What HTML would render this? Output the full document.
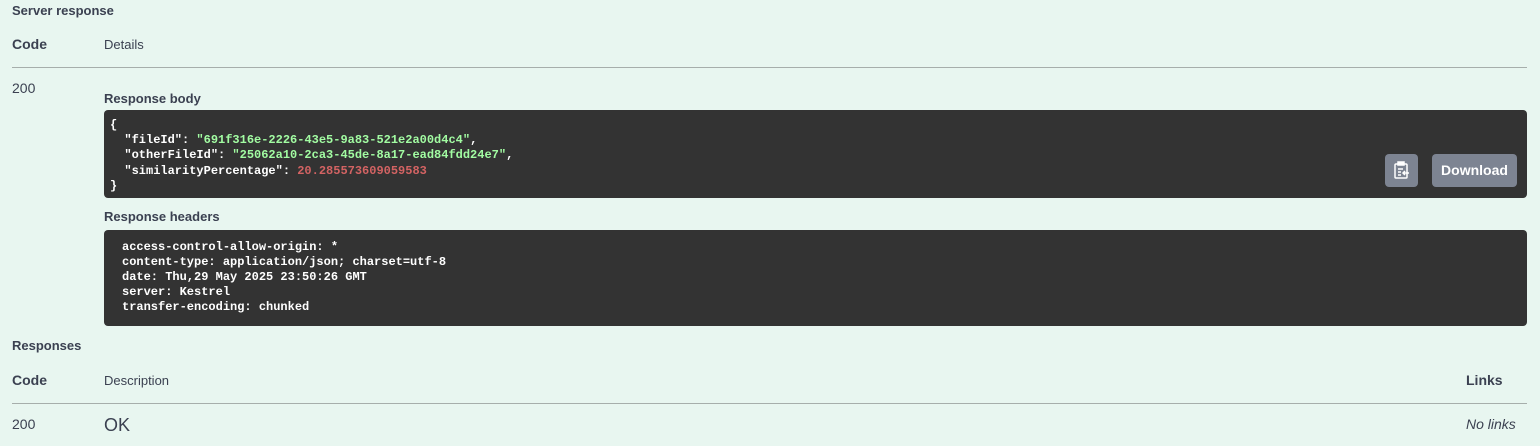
<!DOCTYPE html>
<html><head><style>
body{margin:0;width:1540px;height:446px;background:#e8f6f0;font-family:"Liberation Sans",Arial,sans-serif;color:#3b4151;position:relative;overflow:hidden}
.a{position:absolute;white-space:nowrap}
.h{font-size:12px;font-weight:bold}
.line{position:absolute;left:12px;width:1515px;height:1px;background:#a6aeab}
pre{margin:0;font-family:"Liberation Mono",monospace;font-size:12px;font-weight:bold;color:#fff;}
.box{position:absolute;left:104px;width:1423px;background:#333;border-radius:4px}
.s{color:#a2fca2}.n{color:#d36363}
</style></head><body>
<div class="a h" style="left:12px;top:3px;font-size:13px">Server response</div>
<div class="a" style="left:12px;top:36px;font-size:14px;font-weight:bold">Code</div>
<div class="a" style="left:104px;top:37px;font-size:13px">Details</div>
<div class="line" style="top:67px"></div>
<div class="a" style="left:12px;top:80px;font-size:14px">200</div>
<div class="a h" style="left:104px;top:91px;font-size:13px">Response body</div>
<div class="box" style="top:110px;height:88px">
<pre style="position:absolute;left:6px;top:8px;line-height:15.2px">{
  "fileId": <span class="s">"691f316e-2226-43e5-9a83-521e2a00d4c4"</span>,
  "otherFileId": <span class="s">"25062a10-2ca3-45de-8a17-ead84fdd24e7"</span>,
  "similarityPercentage": <span class="n">20.285573609059583</span>
}</pre>
<div style="position:absolute;left:1281px;top:44px;width:33px;height:33px;background:#7d8492;border-radius:4px">
<svg width="33" height="33" viewBox="0 0 33 33"><g fill="none" stroke="#fff" stroke-width="1.5"><rect x="10" y="10" width="12" height="14" rx="1"/><rect x="13" y="8" width="6" height="3" fill="#fff"/><path d="M13 15h5M13 18h3M13 21h3M24 19h-6M20 17l-2 2 2 2"/></g></svg></div>
<div style="position:absolute;left:1328px;top:44px;width:85px;height:33px;background:#7d8492;border-radius:4px;color:#fff;font-weight:bold;font-size:14px;line-height:33px;text-align:center">Download</div>
</div>
<div class="a h" style="left:104px;top:209px;font-size:13px">Response headers</div>
<div class="box" style="top:230px;height:96px">
<pre style="position:absolute;left:18px;top:10px;line-height:15px">access-control-allow-origin: *
content-type: application/json; charset=utf-8
date: Thu,29 May 2025 23:50:26 GMT
server: Kestrel
transfer-encoding: chunked</pre>
</div>
<div class="a h" style="left:12px;top:338px;font-size:13px">Responses</div>
<div class="a" style="left:12px;top:372px;font-size:14px;font-weight:bold">Code</div>
<div class="a" style="left:104px;top:373px;font-size:13px">Description</div>
<div class="a" style="left:1466px;top:372px;font-size:14px;font-weight:bold">Links</div>
<div class="line" style="top:403px"></div>
<div class="a" style="left:12px;top:416px;font-size:14px">200</div>
<div class="a" style="left:104px;top:415px;font-size:18px">OK</div>
<div class="a" style="left:1466px;top:416px;font-size:14px;font-style:italic">No links</div>
</body></html>
